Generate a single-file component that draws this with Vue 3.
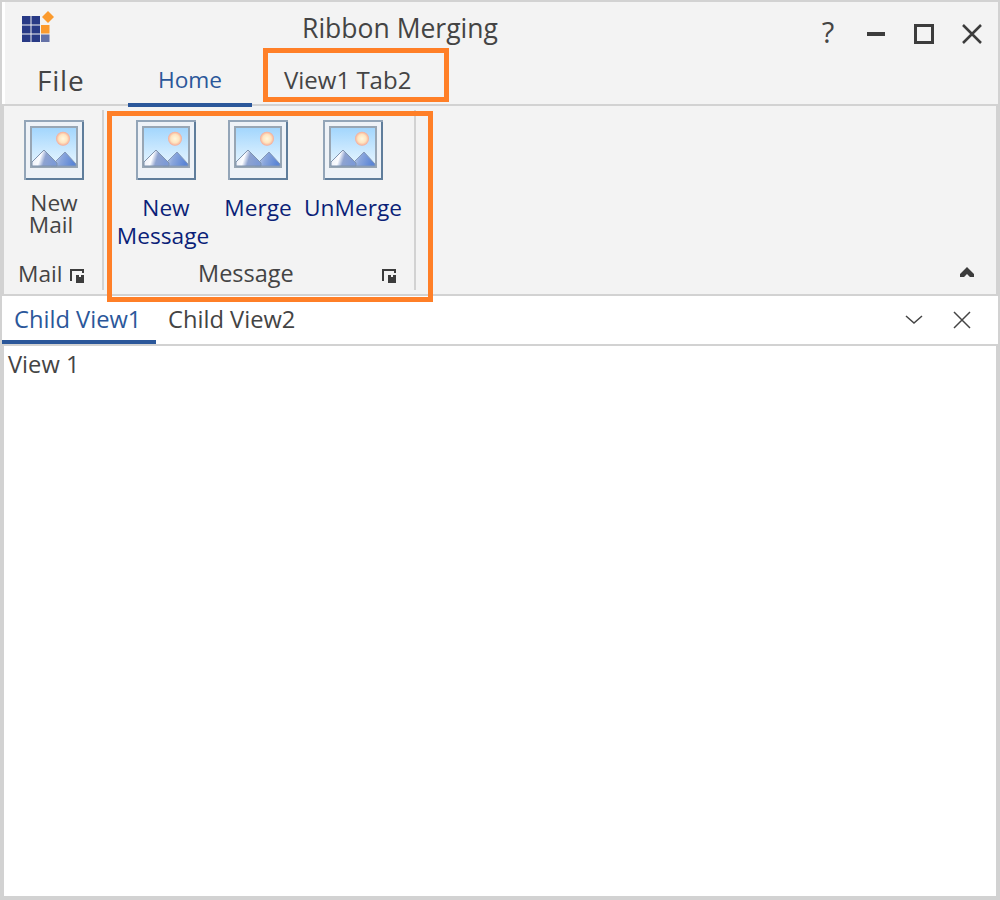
<template>
  <div class="window">
    <!-- 共通アイコン -->
    <svg class="sprite" width="0" height="0">
      <defs>
        <linearGradient id="sky" x1="0" y1="0" x2="0" y2="1">
          <stop offset="0" stop-color="#a3d6fd" />
          <stop offset="1" stop-color="#e8f6ff" />
        </linearGradient>
        <linearGradient id="mount" x1="0" y1="0" x2="1" y2="0.2">
          <stop offset="0" stop-color="#e6ebf6" />
          <stop offset="0.4" stop-color="#fbfcff" />
          <stop offset="0.6" stop-color="#8ea3d0" />
          <stop offset="1" stop-color="#7d9ad6" />
        </linearGradient>
        <linearGradient id="mount2" x1="0" y1="0" x2="1" y2="0.2">
          <stop offset="0" stop-color="#dfe6f5" />
          <stop offset="0.5" stop-color="#8aa6dc" />
          <stop offset="1" stop-color="#5c86d6" />
        </linearGradient>
        <radialGradient id="sun">
          <stop offset="0" stop-color="#fff8e0" />
          <stop offset="0.6" stop-color="#ffe5c0" />
          <stop offset="1" stop-color="#f6a995" />
        </radialGradient>
      </defs>
      <symbol id="picture" viewBox="0 0 60 60">
        <rect x="0" y="0" width="60" height="60" fill="#93a5b8" />
        <path d="M2 60H60V2H58V58H2Z" fill="#5f7d9b" />
        <rect x="2" y="2" width="56" height="56" fill="#eef2f7" />
        <rect x="6" y="6" width="48" height="42" fill="#98a6b4" />
        <rect x="8" y="8" width="44" height="38" fill="url(#sky)" />
        <circle cx="39" cy="18.700" r="7" fill="url(#sun)" />
        <path d="M27 46L41 32L52 44V46Z" fill="url(#mount2)" stroke="#8398b8" stroke-width="1" />
        <path d="M8 46V42L20 30L33 43V46Z" fill="url(#mount)" stroke="#7f93ad" stroke-width="1" />
      </symbol>
      <symbol id="launcher" viewBox="0 0 14 14">
        <path d="M1 12V1H13V4" fill="none" stroke="#3c3c3c" stroke-width="2" />
        <path d="M6 6H9V8H11V6H14V14H6Z" fill="#3c3c3c" />
      </symbol>
    </svg>

    <header class="titlebar">
      <svg class="logo" width="32" height="32" viewBox="0 0 32 32">
        <g fill="#283a86">
          <rect x="0" y="5" width="8.500" height="8.500" />
          <rect x="9.500" y="5" width="8.500" height="8.500" />
          <rect x="0" y="14.500" width="8.500" height="8" />
          <rect x="9.500" y="14.500" width="8.500" height="8" />
          <rect x="0" y="23.500" width="8.500" height="7.500" />
          <rect x="9.500" y="23.500" width="8.500" height="7.500" />
          <rect x="19" y="23.500" width="8.500" height="7.500" opacity="0.7" />
        </g>
        <rect x="19" y="14" width="8.500" height="8.500" fill="#fb9a2d" />
        <path d="M26 0L32 6L26 12L20 6Z" fill="#fb9a2d" />
      </svg>
      <div class="title">Ribbon Merging</div>
      <div class="controls">
        <span class="help">?</span>
        <svg width="22" height="22" viewBox="0 0 22 22"><rect x="2" y="9" width="18" height="4" fill="#3c3c3c" /></svg>
        <svg width="22" height="22" viewBox="0 0 22 22"><rect x="2.500" y="2.500" width="17" height="17" fill="none" stroke="#3c3c3c" stroke-width="3" /></svg>
        <svg width="22" height="22" viewBox="0 0 22 22"><path d="M2 2L20 20M20 2L2 20" stroke="#3c3c3c" stroke-width="2.500" /></svg>
      </div>
    </header>

    <nav class="tabs">
      <div class="tab file">File</div>
      <div class="tab active">Home</div>
      <div class="tab view">View1 Tab2</div>
    </nav>
    <div class="mark mark-tab"></div>

    <section class="ribbon">
      <div class="group mail">
        <div class="btn plain">
          <svg class="pic" width="60" height="60"><use href="#picture" /></svg>
          <div class="label">New</div>
          <div class="label shift">Mail</div>
        </div>
        <div class="group-foot">
          <span>Mail</span>
          <svg width="14" height="14"><use href="#launcher" /></svg>
        </div>
      </div>
      <div class="sep"></div>
      <div class="group message">
        <div class="btns">
          <div v-for="b in buttons" :key="b.name" class="btn" :class="b.cls">
            <svg class="pic" width="60" height="60"><use href="#picture" /></svg>
            <div class="label">{{ b.name }}</div>
            <div v-if="b.second" class="label shift">{{ b.second }}</div>
          </div>
        </div>
        <div class="group-foot">
          <span class="foot-name">Message</span>
          <svg width="14" height="14"><use href="#launcher" /></svg>
        </div>
      </div>
      <div class="sep"></div>
      <svg class="collapse" width="14" height="10" viewBox="0 0 14 10">
        <path d="M7 0L14 7V10H10L7 7L4 10H0V7Z" fill="#3c3c3c" />
      </svg>
    </section>
    <div class="mark mark-group"></div>

    <div class="child-tabs">
      <div class="child active">Child View1</div>
      <div class="child">Child View2</div>
      <div class="child-actions">
        <svg width="18" height="10" viewBox="0 0 18 10"><path d="M1 1L9 8L17 1" fill="none" stroke="#444" stroke-width="1.500" /></svg>
        <svg width="18" height="18" viewBox="0 0 18 18"><path d="M1 1L17 17M17 1L1 17" stroke="#444" stroke-width="1.500" /></svg>
      </div>
    </div>

    <main class="content">View 1</main>
  </div>
</template>

<script setup>
// リボンのボタン定義
const buttons = [
  { name: 'New', second: 'Message', cls: 'new-msg' },
  { name: 'Merge', cls: 'merge' },
  { name: 'UnMerge', cls: 'unmerge' }
]
</script>

<style>
body { margin: 0; background: #fff; }
</style>

<style scoped>
.window {
  position: relative;
  width: 1000px;
  height: 900px;
  box-sizing: border-box;
  border: 2px solid #d2d2d2;
  background: #f3f3f3;
  font-family: "Open Sans", "Liberation Sans", sans-serif;
  color: #444;
  display: flex;
  flex-direction: column;
}
.sprite { position: absolute; }
.titlebar {
  height: 56px;
  flex: none;
  display: flex;
  align-items: flex-start;
  border-left: 3px solid #fff;
}
.logo { margin: 9px 0 0 17px; filter: blur(0.4px); }
.title {
  width: 200px;
  margin: 8px 0 0 246px;
  text-align: center;
  font-size: 26.500px;
  line-height: 36px;
  white-space: nowrap;
}
.controls {
  display: flex;
  align-items: center;
  gap: 26px;
  margin: 20px 0 0 auto;
  padding-right: 15px;
}
.help { font-size: 29px; line-height: 20px; width: 22px; text-align: center; margin-bottom: 3px; }
.tabs {
  height: 46px;
  flex: none;
  display: flex;
  border-left: 3px solid #fff;
}
.tab { font-size: 22.700px; line-height: 44px; }
.file { font-size: 28px; letter-spacing: 0.800px; line-height: 44px; margin-left: 32px; width: 91px; }
.tabs .active {
  width: 124px;
  height: 49px;
  box-sizing: border-box;
  text-align: center;
  color: #2b579a;
  border-bottom: 4px solid #2b579a;
  position: relative;
  z-index: 1;
}
.view { margin-left: 32px; font-size: 24px; line-height: 44px; }
.ribbon {
  height: 188px;
  flex: none;
  display: flex;
  border: 2px solid #d2d2d2;
}
.group { display: flex; flex-direction: column; }
.mail { width: 98px; }
.message { width: 310px; }
.btn { display: flex; flex-direction: column; align-items: center; color: #0b1f78; }
.btn.plain { color: #444; width: 100px; }
.pic { margin-top: 14px; flex: none; }
.label { font-size: 22.700px; line-height: 28px; white-space: nowrap; }
.plain .label { line-height: 22px; }
.shift { margin-right: 6px; }
.btns { display: flex; height: 156px; padding-left: 12px; }
.new-msg { width: 100px; }
.merge { width: 70px; margin-left: 7px; }
.unmerge { width: 100px; margin-left: 10px; }
.btn .pic + .label { margin-top: 14px; }
.plain .pic + .label { margin-top: 12px; }
.group-foot {
  margin-top: auto;
  height: 30px;
  display: flex;
  align-items: center;
  font-size: 23.500px;
  padding: 0 0 6px 14px;
  gap: 8px;
}
.group-foot svg { margin-top: 6px; }
.mail .group-foot { font-size: 22.700px; }
.message .group-foot { padding-left: 0; gap: 0; }
.foot-name { width: 278px; padding-left: 94px; box-sizing: border-box; }
.sep { width: 2px; margin: 4px 0; background: #d2d2d2; flex: none; }
.collapse { margin: auto 22px 17px auto; }
.child-tabs {
  height: 48px;
  flex: none;
  display: flex;
  background: #fff;
  border-bottom: 2px solid #d2d2d2;
  font-size: 23.700px;
}
.child { line-height: 46px; padding: 0 12px; }
.child.active {
  width: 154px;
  height: 48px;
  box-sizing: border-box;
  white-space: nowrap;
  color: #2b579a;
  border-bottom: 4px solid #2b579a;
}
.child-actions {
  margin-left: auto;
  display: flex;
  align-items: center;
  gap: 30px;
  padding-right: 27px;
}
.content {
  flex: 1;
  background: #fff;
  font-size: 23.700px;
  line-height: 36px;
  padding-left: 4px;
  border: solid #d2d2d2;
  border-width: 0 2px 2px 2px;
}
/* 強調枠はコンテンツの上に重ねる */
.mark {
  position: absolute;
  box-sizing: border-box;
  border: 5px solid #ff7f27;
  pointer-events: none;
  z-index: 2;
}
.mark-tab { left: 261px; top: 46px; width: 186px; height: 54px; }
.mark-group { left: 105px; top: 109px; width: 326px; height: 191px; }
</style>
